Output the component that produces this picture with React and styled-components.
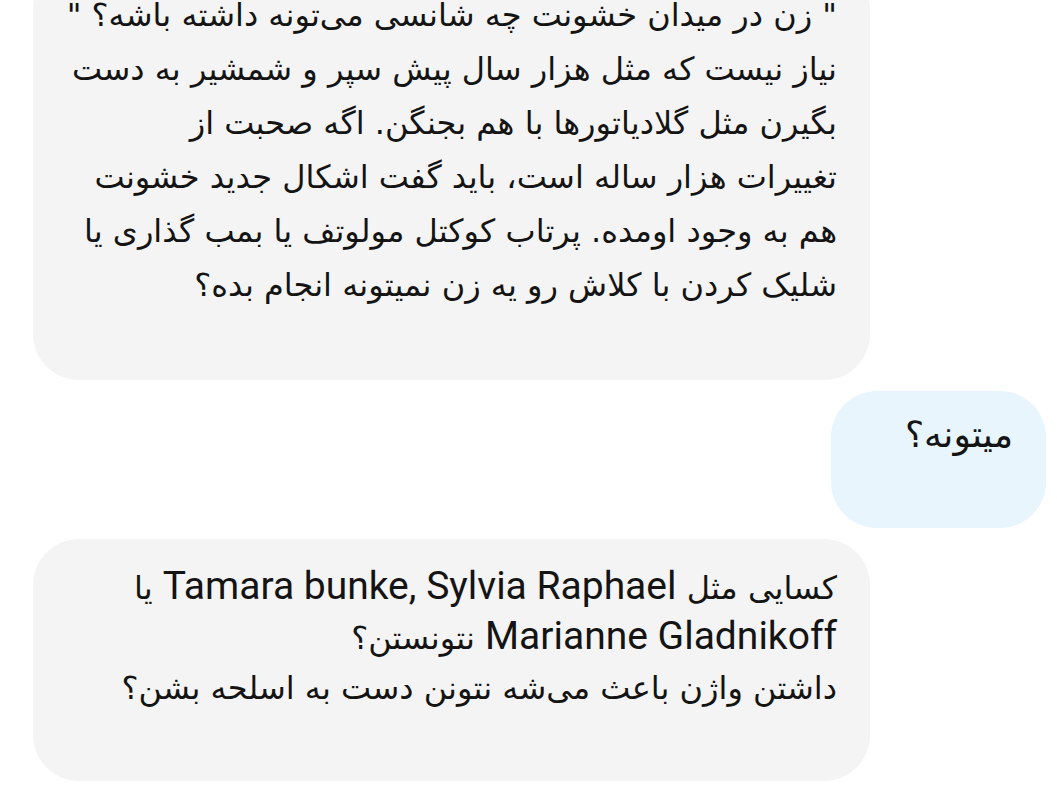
import React from 'react';
import styled, { createGlobalStyle } from 'styled-components';

const GlobalStyle = createGlobalStyle`
  html, body {
    margin: 0;
    padding: 0;
    background: #ffffff;
    overflow: hidden;
  }
`;

const Thread = styled.div`
  display: flex;
  flex-direction: column;
  gap: 11px;
  width: 1057px;
  margin-top: -36px;
  padding: 0 11px 0 33px;
  box-sizing: border-box;
  font-family: "DejaVu Sans", Roboto, sans-serif;
  color: #141414;
`;

const Bubble = styled.div`
  direction: rtl;
  flex-shrink: 0;
  align-self: ${(p) => (p.$mine ? 'flex-end' : 'flex-start')};
  width: ${(p) => (p.$mine ? '215px' : '837px')};
  min-height: ${(p) => p.$minHeight || 0}px;
  box-sizing: border-box;
  padding: ${(p) => p.$padTop}px 33px ${(p) => p.$padBottom}px 30px;
  background: ${(p) => (p.$mine ? '#e8f5fd' : '#f4f4f4')};
  border-radius: 46px;
`;

const Line = styled.div`
  white-space: nowrap;
  font-size: ${(p) => p.$size || 32}px;
  line-height: ${(p) => p.$lh || 54}px;
`;

const Latin = styled.span`
  font-family: Roboto, "Liberation Sans", sans-serif;
  font-size: 39px;
  line-height: 1;
  direction: ltr;
  unicode-bidi: isolate;
`;

const first = [
  '" زن در میدان خشونت چه شانسی می‌تونه داشته باشه؟ "',
  'نیاز نیست که مثل هزار سال پیش سپر و شمشیر به دست',
  'بگیرن مثل گلادیاتورها با هم بجنگن. اگه صحبت از',
  'تغییرات هزار ساله است، باید گفت اشکال جدید خشونت',
  'هم به وجود اومده. پرتاب کوکتل مولوتف یا بمب گذاری یا',
  'شلیک کردن با کلاش رو یه زن نمیتونه انجام بده؟',
];

export default function App() {
  return (
    <>
      <GlobalStyle />
      <Thread>
        <Bubble $padTop={24} $padBottom={68}>
          {first.map((t, i) => (
            <Line key={i}>{t}</Line>
          ))}
        </Bubble>
        <Bubble $mine $padTop={22} $padBottom={20} $minHeight={137}>
          <Line $size={36} $lh={44}>میتونه؟</Line>
        </Bubble>
        <Bubble $padTop={24} $padBottom={68}>
          <Line $lh={50}>
            کسایی مثل <Latin>Tamara bunke, Sylvia Raphael</Latin> یا
          </Line>
          <Line $lh={50}>
            <Latin>Marianne Gladnikoff</Latin> نتونستن؟
          </Line>
          <Line $lh={50}>داشتن واژن باعث می‌شه نتونن دست به اسلحه بشن؟</Line>
        </Bubble>
      </Thread>
    </>
  );
}
